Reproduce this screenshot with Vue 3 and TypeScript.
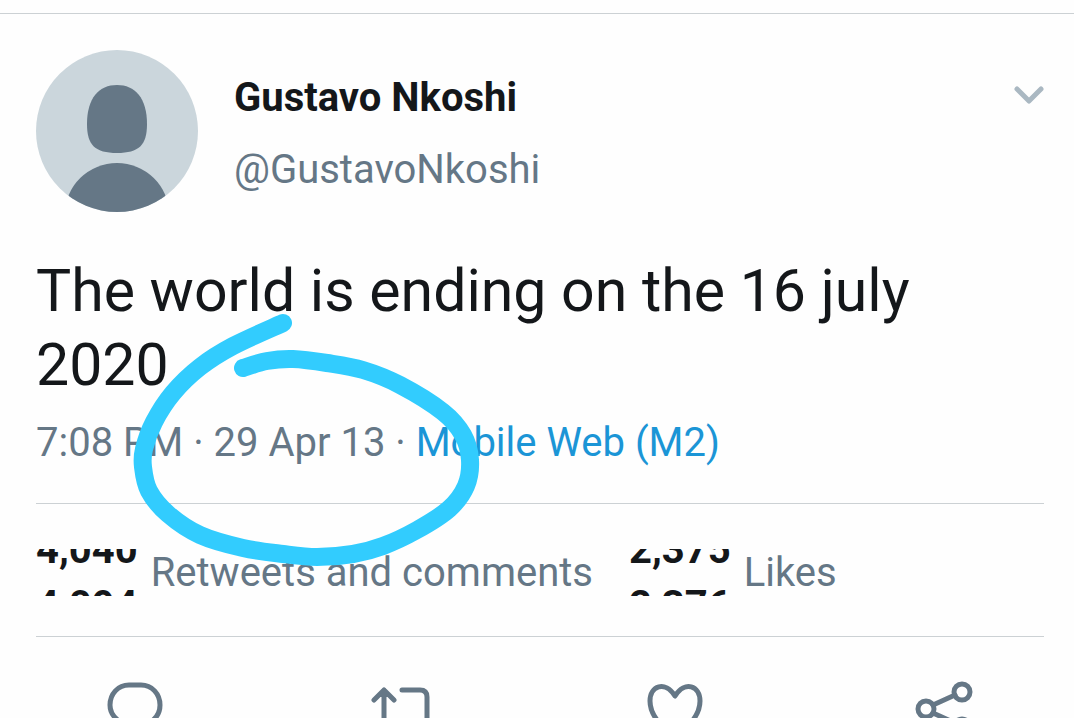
<script setup lang="ts">
interface Stat {
  previous: string
  next: string
  label: string
}

const stats: Stat[] = [
  { previous: '4,040', next: '4,094', label: 'Retweets and comments' },
  { previous: '2,375', next: '2,376', label: 'Likes' },
]

const stroke: [number, number][] = [
  [283, 323], [233, 346], [200, 367], [173, 393], [154, 422], [144, 449],
  [143, 467], [149, 491], [168, 514], [200, 535], [243, 548], [283, 554],
  [317, 557], [353, 554], [383, 546], [417, 530], [449, 509], [466, 486],
  [470, 460], [463, 435], [443, 412], [400, 385], [363, 370], [327, 363],
  [293, 359], [267, 361], [243, 368],
]

// Catmull-Rom spline through the pen samples, written as cubic segments.
function smooth(points: [number, number][]): string {
  let d = `M${points[0][0]} ${points[0][1]}`
  for (let i = 0; i < points.length - 1; i++) {
    const a = points[Math.max(i - 1, 0)]
    const b = points[i]
    const c = points[i + 1]
    const e = points[Math.min(i + 2, points.length - 1)]
    d += ` C${b[0] + (c[0] - a[0]) / 6} ${b[1] + (c[1] - a[1]) / 6}`
    d += ` ${c[0] - (e[0] - b[0]) / 6} ${c[1] - (e[1] - b[1]) / 6} ${c[0]} ${c[1]}`
  }
  return d
}

const circlePath = smooth(stroke)
</script>

<template>
  <main class="page">
    <article class="tweet">
      <header class="author">
        <svg class="avatar" viewBox="0 0 162 162" role="img" aria-label="Default profile picture">
          <clipPath id="avatar-clip"><circle cx="81" cy="81" r="81" /></clipPath>
          <g clip-path="url(#avatar-clip)">
            <rect width="162" height="162" fill="#cbd6dc" />
            <path d="M81 35c18 0 30 13 30 39 0 21-8 29-30 29s-30-8-30-29c0-26 12-39 30-39z" fill="#657786" />
            <ellipse cx="81" cy="164" rx="52" ry="51" fill="#657786" />
          </g>
        </svg>
        <div class="names">
          <span class="name">Gustavo Nkoshi</span>
          <span class="handle">@GustavoNkoshi</span>
        </div>
        <button class="more" type="button" aria-label="More options">
          <svg viewBox="0 0 30 20"><path d="M3 3l12 12L27 3" /></svg>
        </button>
      </header>

      <p class="text">The world is ending on the 16 july 2020</p>
      <p class="meta">7:08 PM · 29 Apr 13 · <a href="#">Mobile Web (M2)</a></p>

      <div class="stats">
        <div v-for="stat in stats" :key="stat.label" class="stat">
          <span class="counter">
            <span class="roll">
              <span>{{ stat.previous }}</span>
              <span>{{ stat.next }}</span>
            </span>
          </span>
          <span class="label">{{ stat.label }}</span>
        </div>
      </div>

      <footer class="actions">
        <button type="button" aria-label="Reply">
          <svg viewBox="0 0 60 60">
            <path d="M24 4H36C47 4 55 13 55 24C55 32 51 38 44 42L29 56V44C15 44 5 35 5 24C5 13 13 4 24 4Z" />
          </svg>
        </button>
        <button type="button" aria-label="Retweet">
          <svg viewBox="0 0 60 60">
            <path d="M-1 19L9 9L19 19M9 9V50Q9 56 15 56H28M27 9H45Q52 9 52 16V56M42 46L52 56L62 46" />
          </svg>
        </button>
        <button type="button" aria-label="Like">
          <svg viewBox="0 0 60 60">
            <path d="M30 15C20 -1 5 5 5 20C5 36 20 49 30 55C40 49 55 36 55 20C55 5 40 -1 30 15Z" />
          </svg>
        </button>
        <button type="button" aria-label="Share">
          <svg viewBox="0 0 60 60">
            <circle cx="47" cy="11" r="8" />
            <circle cx="11" cy="28" r="8" />
            <circle cx="47" cy="46" r="8" />
            <path d="M18 24L40 14M18 32L40 42" />
          </svg>
        </button>
      </footer>

      <svg class="ink" viewBox="130 310 354 260" aria-hidden="true">
        <path :d="circlePath" />
      </svg>
    </article>
  </main>
</template>

<style>
body {
  margin: 0;
  background: #fefefe;
}
</style>

<style scoped>
.page {
  box-sizing: border-box;
  height: 100vh;
  overflow: hidden;
  padding-top: 13px;
  background: #fefefe;
  color: #14171a;
  font-family: Roboto, "Liberation Sans", sans-serif;
  font-size: 40px;
  line-height: 48px;
}

.tweet {
  position: relative;
  padding: 36px 30px 0 36px;
  border-top: 1px solid #ccd1d4;
}

.author {
  display: flex;
  align-items: flex-start;
  gap: 36px;
}

.avatar {
  flex: none;
  width: 162px;
  height: 162px;
}

.names {
  display: flex;
  flex: 1;
  flex-direction: column;
  gap: 24px;
  padding-top: 24px;
}

.name {
  font-weight: 700;
}

.handle,
.meta,
.label {
  color: #657786;
}

.more {
  margin-top: 36px;
}

button {
  display: block;
  padding: 0;
  border: 0;
  background: none;
  color: #657786;
  cursor: pointer;
}

button svg {
  display: block;
  overflow: visible;
  fill: none;
  stroke: currentColor;
  stroke-width: 5;
  stroke-linecap: round;
  stroke-linejoin: round;
}

.more svg {
  width: 30px;
  height: 20px;
  stroke: #aab8c2;
}

.text {
  margin: 42px 0 0;
  font-size: 59px;
  line-height: 74px;
}

.meta {
  margin: 17px 0 0;
}

.meta a {
  color: #1b95d6;
  text-decoration: none;
}

.stats {
  display: flex;
  gap: 36px;
  margin-top: 36px;
  padding: 45px 0 39px;
  border-top: 1px solid #ccd1d4;
  border-bottom: 1px solid #ccd1d4;
}

.stat {
  display: flex;
  gap: 13px;
}

.counter {
  height: 47px;
  overflow: hidden;
  font-weight: 700;
}

.roll {
  display: flex;
  flex-direction: column;
  gap: 8px;
  margin-top: -23px;
}

.actions {
  display: flex;
  justify-content: space-between;
  padding: 44px 69px 0;
}

.actions svg {
  width: 60px;
  height: 60px;
}

.ink {
  position: absolute;
  top: 296px;
  left: 130px;
  width: 354px;
  height: 260px;
  fill: none;
  stroke: #32ccfe;
  stroke-width: 18;
  stroke-linecap: round;
  stroke-linejoin: round;
  pointer-events: none;
}
</style>
